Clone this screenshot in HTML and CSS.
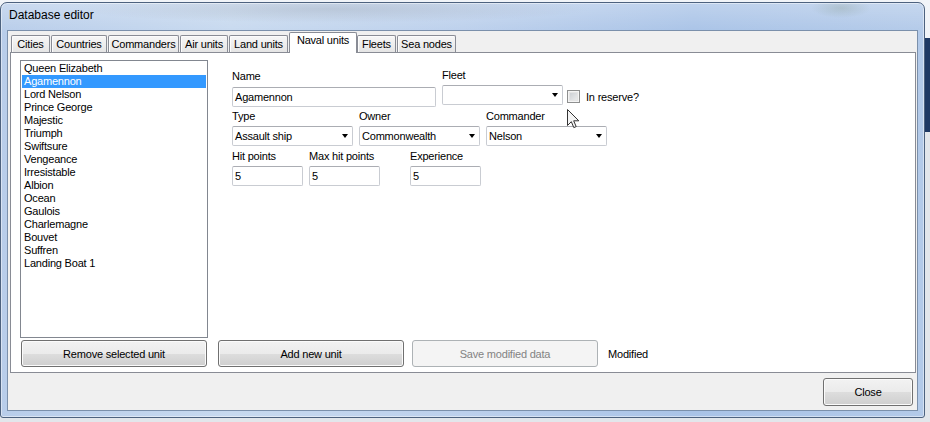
FILE: index.html
```html
<!DOCTYPE html>
<html>
<head>
<meta charset="utf-8">
<title>Database editor</title>
<link rel="stylesheet" href="styles.css">
</head>
<body>
<div class="window">
  <div class="titlebar"><span class="title">Database editor</span></div>
  <div class="client">
    <div class="tabctl">
      <div class="tabstrip">
        <div class="tab t-cities">Cities</div>
        <div class="tab t-countries">Countries</div>
        <div class="tab t-commanders">Commanders</div>
        <div class="tab t-air">Air units</div>
        <div class="tab t-land">Land units</div>
        <div class="tab t-naval sel">Naval units</div>
        <div class="tab t-fleets">Fleets</div>
        <div class="tab t-sea">Sea nodes</div>
      </div>
      <div class="panel">
        <div class="col-left">
          <ul class="listbox">
            <li>Queen Elizabeth</li>
            <li class="sel">Agamennon</li>
            <li>Lord Nelson</li>
            <li>Prince George</li>
            <li>Majestic</li>
            <li>Triumph</li>
            <li>Swiftsure</li>
            <li>Vengeance</li>
            <li>Irresistable</li>
            <li>Albion</li>
            <li>Ocean</li>
            <li>Gaulois</li>
            <li>Charlemagne</li>
            <li>Bouvet</li>
            <li>Suffren</li>
            <li>Landing Boat 1</li>
          </ul>
          <button class="btn btn-remove">Remove selected unit</button>
        </div>
        <div class="col-right">
          <div class="form">
            <div class="row">
              <div class="field f-name"><label>Name</label><div class="textbox">Agamennon</div></div>
              <div class="field f-fleet"><label>Fleet</label><div class="combo"><span class="val"></span><span class="arrow"></span></div></div>
              <div class="check"><span class="box"></span><span class="check-label">In reserve?</span></div>
            </div>
            <div class="row row2">
              <div class="field f-type"><label>Type</label><div class="combo"><span class="val">Assault ship</span><span class="arrow"></span></div></div>
              <div class="field f-owner"><label>Owner</label><div class="combo"><span class="val">Commonwealth</span><span class="arrow"></span></div></div>
              <div class="field f-cmd"><label>Commander</label><div class="combo"><span class="val">Nelson</span><span class="arrow"></span></div></div>
            </div>
            <div class="row row3">
              <div class="field f-hp"><label>Hit points</label><div class="textbox">5</div></div>
              <div class="field f-mhp"><label>Max hit points</label><div class="textbox">5</div></div>
              <div class="field f-exp"><label>Experience</label><div class="textbox">5</div></div>
            </div>
          </div>
          <div class="actions">
            <button class="btn">Add new unit</button>
            <button class="btn disabled">Save modified data</button>
            <span class="modified">Modified</span>
          </div>
        </div>
      </div>
    </div>
    <div class="footer"><button class="btn btn-close">Close</button></div>
  </div>
</div>
<svg class="cursor" width="13" height="20" viewBox="0 0 13 20">
  <path d="M0.5 0.5 L0.5 16.5 L4.3 12.7 L6.8 18.6 L9.2 17.6 L6.7 11.8 L11.8 11.8 Z" fill="#f4f4f4" stroke="#333" stroke-width="1" stroke-linejoin="miter"/>
</svg>
</body>
</html>
```

FILE: styles.css
```css
html, body {
  margin: 0;
  padding: 0;
}
body {
  width: 930px;
  height: 422px;
  overflow: hidden;
  position: relative;
  background: linear-gradient(to bottom, #f1f4f8 0, #f1f4f8 38px, #1e3964 38px, #1e3964 132px, #e2e6eb 132px);
  font-family: "Liberation Sans", Arial, sans-serif;
  font-size: 11px;
  letter-spacing: -0.2px;
  color: #000;
}

.window {
  margin-top: 2px;
  width: 925px;
  height: 416px;
  box-sizing: border-box;
  border: 1px solid #4d627f;
  border-radius: 7px 7px 3px 3px;
  padding: 0 6px 6px 6px;
  display: flex;
  flex-direction: column;
  background:
    radial-gradient(ellipse 260px 14px at 330px 6px, rgba(140,150,165,0.30), rgba(140,150,165,0) 100%),
    radial-gradient(ellipse 30px 10px at 840px 5px, rgba(120,140,120,0.25), rgba(120,140,120,0) 100%),
    linear-gradient(to bottom, rgba(255,255,255,0.25), rgba(255,255,255,0) 30px),
    linear-gradient(to right, #b8cdea 0%, #c7d9ef 25%, #bcd0ec 50%, #a9c3e7 75%, #b3cae9 100%);
  box-shadow: inset 0 0 0 1px rgba(255,255,255,0.45);
}

.titlebar {
  height: 27px;
  flex: none;
  box-sizing: border-box;
  margin: 0 -6px;
  padding: 0 0 3px 8px;
  display: flex;
  align-items: center;
}
.title {
  font-size: 12px;
  letter-spacing: 0;
  color: #000;
}

.client {
  flex: 1;
  min-height: 0;
  border: 1px solid #7b90ab;
  background: #f0f0f0;
  display: flex;
  flex-direction: column;
}

.tabctl {
  flex: 1;
  min-height: 0;
  margin: 1px 1px 0 2px;
  display: flex;
  flex-direction: column;
}
.tabstrip {
  flex: none;
  height: 20px;
  padding-left: 1px;
  display: flex;
  align-items: flex-end;
}
.tab {
  height: 17px;
  box-sizing: border-box;
  border: 1px solid #898c95;
  border-bottom: none;
  border-radius: 2px 2px 0 0;
  margin-right: 1px;
  padding-top: 2px;
  line-height: 13px;
  text-align: center;
  white-space: nowrap;
  background: linear-gradient(to bottom, #f7f7f7, #e5e5e5);
  box-shadow: inset 1px 1px 0 #fcfcfc;
}
.tab.sel {
  height: 21px;
  margin-bottom: -1px;
  margin-right: 0;
  padding-top: 1px;
  background: #fff;
  box-shadow: none;
  position: relative;
  z-index: 2;
}
.t-cities { width: 39px; }
.t-countries { width: 56px; }
.t-commanders { width: 71px; }
.t-air { width: 48px; }
.t-land { width: 59px; }
.t-naval { width: 68px; }
.t-fleets { width: 39px; }
.t-sea { width: 59px; }

.panel {
  flex: 1;
  min-height: 0;
  border: 1px solid #898c95;
  background: #fff;
  display: flex;
  gap: 10px;
  padding: 7px 0 5px 9px;
}

.col-left {
  width: 188px;
  flex: none;
  display: flex;
  flex-direction: column;
  gap: 2px;
}
.listbox {
  flex: 1;
  margin: 0;
  padding: 1px;
  list-style: none;
  border: 1px solid #828790;
  background: #fff;
}
.listbox li {
  height: 13px;
  line-height: 13px;
  padding-left: 2px;
  white-space: nowrap;
}
.listbox li.sel {
  background: #3399ff;
  color: #fff;
}

.btn {
  width: 186px;
  height: 27px;
  flex: none;
  box-sizing: border-box;
  padding: 0;
  border: 1px solid #707070;
  border-radius: 3px;
  background: linear-gradient(to bottom, #f2f2f2 0%, #ebebeb 50%, #dddddd 51%, #cfcfcf 100%);
  box-shadow: inset 0 0 0 1px #fbfbfb;
  font-family: inherit;
  font-size: 11px;
  letter-spacing: -0.2px;
  color: #000;
}
.btn-remove { margin-left: 1px; }
.btn.disabled {
  border-color: #adb2b5;
  background: #f4f4f4;
  box-shadow: none;
  color: #838383;
}
.btn-close {
  width: 90px;
  height: 28px;
}

.col-right {
  flex: 1;
  display: flex;
  flex-direction: column;
  gap: 2px;
}
.form {
  flex: 1;
  padding: 9px 0 0 14px;
}
.row {
  display: flex;
  align-items: flex-start;
}
.row2 { margin-top: 3px; }
.row3 { margin-top: 4px; }

.field {
  display: flex;
  flex-direction: column;
  gap: 3px;
  flex: none;
}
.field label {
  height: 13px;
  line-height: 13px;
  white-space: nowrap;
}
.f-name { width: 204px; padding-top: 1px; gap: 4px; margin-right: 6px; }
.f-fleet { width: 121px; margin-right: 4px; }
.f-type, .f-owner, .f-cmd { width: 121px; }
.f-type, .f-owner { margin-right: 6px; }
.f-hp, .f-mhp, .f-exp { width: 71px; }
.f-hp { margin-right: 6px; }
.f-mhp { margin-right: 30px; }

.textbox, .combo {
  height: 20px;
  box-sizing: border-box;
  border: 1px solid #c9ccd2;
  border-top-color: #abadb3;
  border-radius: 2px;
  background: #fff;
  line-height: 18px;
  white-space: nowrap;
}
.textbox {
  padding-left: 2px;
}
.combo {
  display: flex;
  align-items: center;
  padding: 0 4px 0 2px;
}
.combo .val {
  flex: 1;
}
.arrow {
  width: 0;
  height: 0;
  border-left: 3.5px solid transparent;
  border-right: 3.5px solid transparent;
  border-top: 4px solid #000;
}

.check {
  margin-top: 21px;
  height: 13px;
  display: flex;
  align-items: center;
  gap: 6px;
}
.box {
  width: 13px;
  height: 13px;
  box-sizing: border-box;
  border: 1px solid #8e8f8f;
  background: linear-gradient(135deg, #c6cacf, #f2f2f2);
  box-shadow: inset 0 0 0 1px #f4f4f4, inset 0 0 0 2px #e4e4e4;
}
.check-label {
  line-height: 13px;
  padding-top: 1px;
}

.actions {
  height: 27px;
  flex: none;
  display: flex;
  align-items: center;
  gap: 8px;
}
.modified {
  margin-left: 2px;
}

.footer {
  flex: none;
  display: flex;
  justify-content: flex-end;
  padding: 5px 4px 4px 0;
}

.cursor {
  position: absolute;
  left: 567px;
  top: 109px;
}
```
